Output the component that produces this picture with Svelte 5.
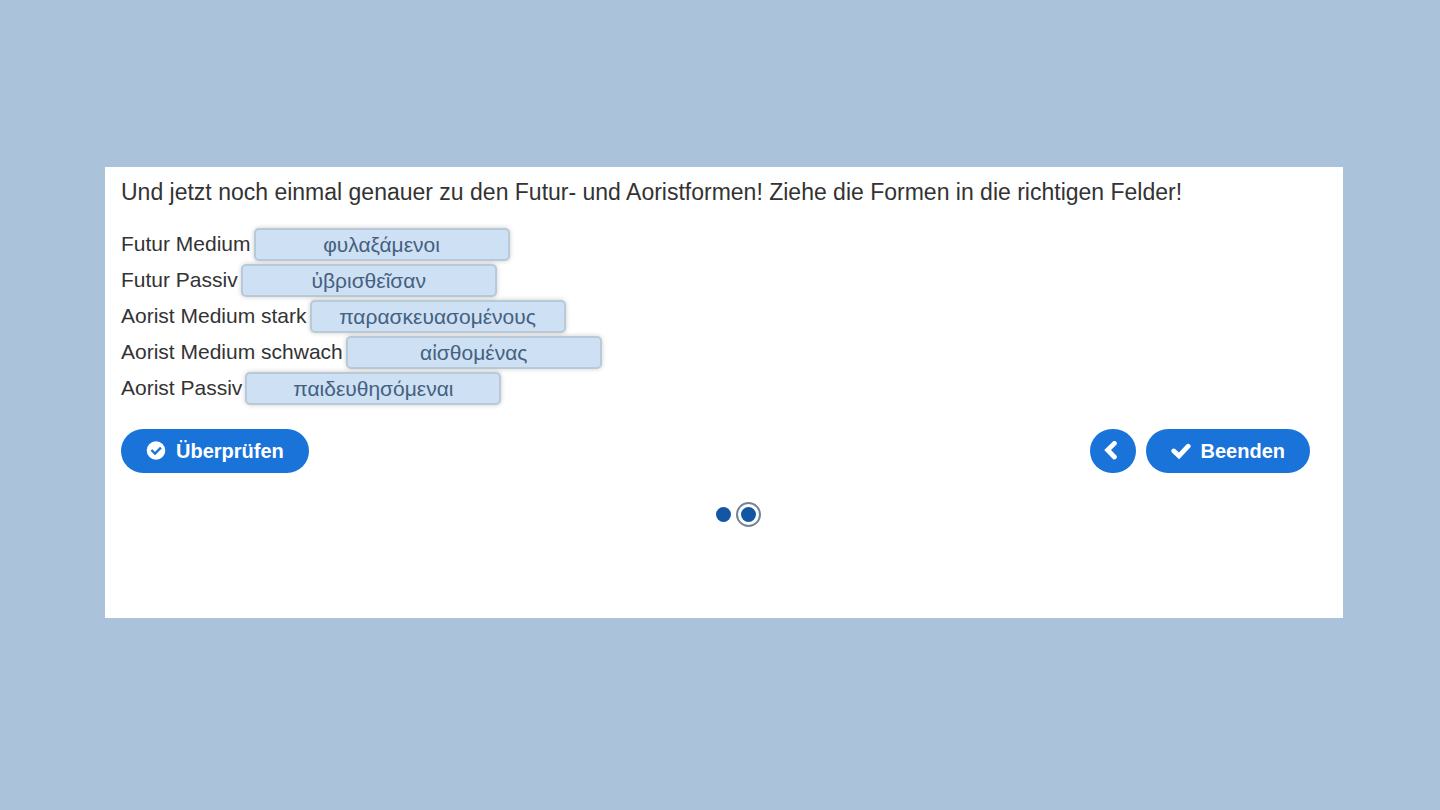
<script>
    const rows = [
        { label: 'Futur Medium', word: 'φυλαξάμενοι' },
        { label: 'Futur Passiv', word: 'ὑβρισθεῖσαν' },
        { label: 'Aorist Medium stark', word: 'παρασκευασομένους' },
        { label: 'Aorist Medium schwach', word: 'αἰσθομένας' },
        { label: 'Aorist Passiv', word: 'παιδευθησόμεναι' }
    ];
    const pages = [1, 2];

    let currentPage = $state(2);
</script>

<main class="quiz">
    <p class="quiz__task">Und jetzt noch einmal genauer zu den Futur- und Aoristformen! Ziehe die Formen in die richtigen Felder!</p>

    <div class="quiz__rows">
        {#each rows as row, i}
            <div class="quiz__row">
                <span class="quiz__label" id="label-{i}">{row.label}</span>
                <button class="quiz__word" draggable="true" aria-describedby="label-{i}">{row.word}</button>
            </div>
        {/each}
    </div>

    <div class="quiz__actions">
        <button class="quiz__btn">
            <svg class="quiz__icon" viewBox="0 0 20 20" aria-hidden="true">
                <circle cx="10" cy="9.5" r="9.3" fill="#fff" />
                <path d="M5.4 9l3.6 3.6 5.9-5.9" fill="none" stroke="#1a73d9" stroke-width="2.4" />
            </svg>
            Überprüfen
        </button>
        <div class="quiz__nav">
            <button class="quiz__btn quiz__btn_round" aria-label="Zurück" onclick={() => (currentPage = 1)}>
                <svg class="quiz__icon" viewBox="0 0 20 20" aria-hidden="true">
                    <path d="M11.4 2.4L4.6 9l6.8 7" fill="none" stroke="#fff" stroke-width="4.8" stroke-linecap="round" />
                </svg>
            </button>
            <button class="quiz__btn">
                <svg class="quiz__icon" viewBox="0 0 20 20" aria-hidden="true">
                    <path d="M2.8 10l5.2 4.8L17.2 5.2" fill="none" stroke="#fff" stroke-width="4.8" stroke-linecap="round" />
                </svg>
                Beenden
            </button>
        </div>
    </div>

    <nav class="quiz__pages">
        {#each pages as page}
            <button
                class="quiz__dot"
                class:quiz__dot_current={page === currentPage}
                aria-label="Seite {page}"
                onclick={() => (currentPage = page)}></button>
        {/each}
    </nav>
</main>

<style>
    :global(body) {
        background: #aac3db;
    }
    .quiz {
        box-sizing: border-box;
        margin: 167px 97px 0 105px;
        padding: 9px 33px 91px 16px;
        background: #fff;
        color: #333;
        font-family: "Liberation Sans", Arial, sans-serif;
        font-size: 21px;
    }
    .quiz__task {
        margin: 0 0 20px;
        font-size: 23px;
        line-height: 32px;
    }
    .quiz__rows {
        display: flex;
        flex-direction: column;
        gap: 3px;
    }
    .quiz__row {
        display: flex;
        gap: 3px;
    }
    .quiz__label {
        line-height: 32px;
    }
    .quiz__word {
        box-sizing: border-box;
        width: 256px;
        height: 33px;
        padding: 0;
        border: 2px solid #b8cad8;
        border-radius: 5px;
        background: #cee0f4;
        box-shadow: 0 0 5px rgba(0, 0, 0, .2);
        color: #44607f;
        font: inherit;
        line-height: 29px;
        cursor: grab;
    }
    .quiz__actions {
        display: flex;
        justify-content: space-between;
        margin-top: 24px;
    }
    .quiz__nav {
        display: flex;
        gap: 10px;
    }
    .quiz__btn {
        display: flex;
        align-items: center;
        justify-content: center;
        gap: 10px;
        height: 44px;
        padding: 0 25px;
        border: 0;
        border-radius: 22px;
        background: #1a73d9;
        color: #fff;
        font: bold 20px/44px "Liberation Sans", Arial, sans-serif;
        cursor: pointer;
    }
    .quiz__btn_round {
        width: 46px;
        padding: 0;
    }
    .quiz__icon {
        width: 20px;
        height: 20px;
    }
    .quiz__pages {
        display: flex;
        align-items: center;
        justify-content: center;
        gap: 5px;
        margin-top: 29px;
        padding-left: 46px;
    }
    .quiz__dot {
        width: 15px;
        height: 15px;
        padding: 0;
        border: 0;
        border-radius: 50%;
        background: #1356a3;
        cursor: pointer;
    }
    .quiz__dot_current {
        box-sizing: border-box;
        width: 25px;
        height: 25px;
        padding: 3px;
        border: 2px solid #73839b;
        background: #1356a3 content-box;
    }
</style>
